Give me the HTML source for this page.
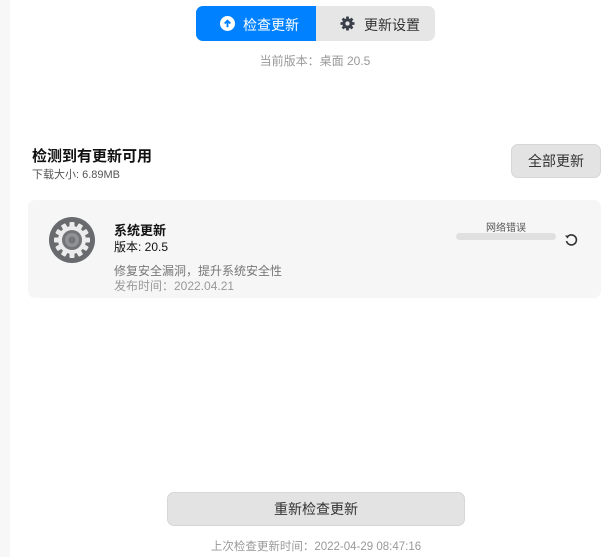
<!DOCTYPE html>
<html><head><meta charset="utf-8"><style>
*{margin:0;padding:0;box-sizing:border-box}
body{width:601px;height:557px;background:#fff;position:relative;overflow:hidden;font-family:"Liberation Sans","Noto Sans CJK SC",sans-serif}
.a{position:absolute}
</style></head><body>
<div class="a" style="left:0;top:0;width:10px;height:557px;background:#f7f7f7"></div>
<div class="a" style="left:196px;top:6px;width:239px;height:35px;border-radius:7px;background:#e6e6e6;overflow:hidden">
 <div class="a" style="left:0;top:0;width:120px;height:35px;background:#0081ff"></div>
 <svg class="a" style="left:24px;top:10px" width="15" height="15" viewBox="0 0 16 16"><circle cx="8" cy="8" r="8" fill="#fff"/><path d="M8 12V5M5 8l3-3 3 3" stroke="#0081ff" stroke-width="2" fill="none"/></svg>
 <div class="a" style="left:47px;top:9px;font-size:14px;color:#fff">检查更新</div>
 <svg class="a" style="left:144px;top:10px" width="15" height="15" viewBox="0 0 16 16"><g fill="#3a3f4a"><circle cx="8" cy="8" r="5.5"/><rect x="6.5" y="0.5" width="3" height="15" rx="0.5"/><rect x="6.5" y="0.5" width="3" height="15" rx="0.5" transform="rotate(45 8 8)"/><rect x="6.5" y="0.5" width="3" height="15" rx="0.5" transform="rotate(90 8 8)"/><rect x="6.5" y="0.5" width="3" height="15" rx="0.5" transform="rotate(135 8 8)"/></g><circle cx="8" cy="8" r="2.3" fill="#e6e6e6"/></svg>
 <div class="a" style="left:168px;top:9px;font-size:14px;color:#333">更新设置</div>
</div>
<div class="a" style="left:0;width:630px;top:52px;text-align:center;font-size:12px;color:#999">当前版本：桌面 20.5</div>
<div class="a" style="left:32px;top:145px;font-size:15px;font-weight:bold;color:#111">检测到有更新可用</div>
<div class="a" style="left:32px;top:166px;font-size:11px;color:#555">下载大小: 6.89MB</div>
<div class="a" style="left:511px;top:144px;width:90px;height:34px;border-radius:7px;background:#e3e3e3;border:1px solid #d6d6d6;font-size:14px;color:#333;text-align:center;line-height:32px">全部更新</div>
<div class="a" style="left:28px;top:200px;width:573px;height:98px;border-radius:7px;background:#f6f6f6"></div>
<svg class="a" style="left:49px;top:217px" width="46" height="46" viewBox="0 0 46 46"><circle cx="23" cy="23" r="23" fill="#686a6d"/><g fill="#ececec"><circle cx="23" cy="23" r="14"/><g id="t"><rect x="20.5" y="5" width="5" height="36" rx="1"/></g><use href="#t" transform="rotate(30 23 23)"/><use href="#t" transform="rotate(60 23 23)"/><use href="#t" transform="rotate(90 23 23)"/><use href="#t" transform="rotate(120 23 23)"/><use href="#t" transform="rotate(150 23 23)"/></g><circle cx="23" cy="23" r="10" fill="#727477"/><circle cx="23" cy="23" r="7" fill="#909295"/><circle cx="23" cy="23" r="3.5" fill="#727477"/></svg>
<div class="a" style="left:114px;top:220px;font-size:13px;font-weight:bold;color:#111">系统更新</div>
<div class="a" style="left:114px;top:238px;font-size:12px;color:#111">版本: 20.5</div>
<div class="a" style="left:114px;top:262px;font-size:12px;color:#777">修复安全漏洞，提升系统安全性</div>
<div class="a" style="left:114px;top:277px;font-size:12px;color:#999">发布时间：2022.04.21</div>
<div class="a" style="left:456px;top:219px;width:100px;text-align:center;font-size:10px;color:#555">网络错误</div>
<div class="a" style="left:456px;top:233px;width:100px;height:7px;border-radius:4px;background:#e0e0e0"></div>
<svg class="a" style="left:564px;top:233px" width="14" height="14" viewBox="0 0 14 14"><path d="M3 4.5A5 5 0 1 1 2.5 8" stroke="#333" stroke-width="1.6" fill="none"/><path d="M1 2.5L3.5 5.5 5.5 2.5z" fill="#333"/></svg>
<div class="a" style="left:167px;top:492px;width:298px;height:34px;border-radius:7px;background:#e3e3e3;border:1px solid #d6d6d6;font-size:14px;color:#333;text-align:center;line-height:32px">重新检查更新</div>
<div class="a" style="left:0;width:632px;top:538px;text-align:center;font-size:11.5px;color:#999">上次检查更新时间：2022-04-29 08:47:16</div>
</body></html>
